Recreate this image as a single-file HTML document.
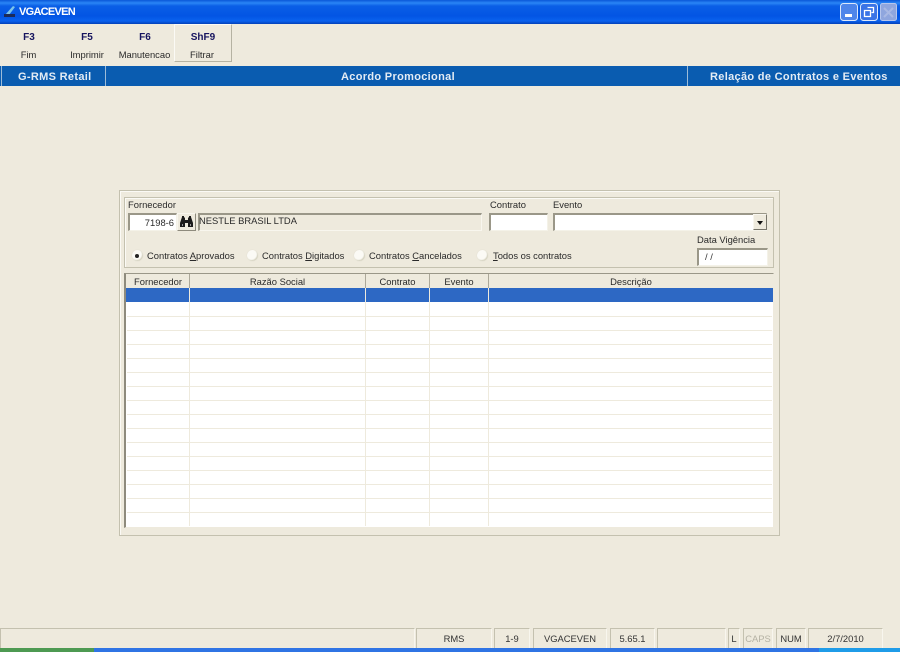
<!DOCTYPE html>
<html><head><meta charset="utf-8"><style>
*{box-sizing:border-box}
html,body{margin:0;padding:0}
body{width:900px;height:652px;position:relative;overflow:hidden;background:#eeeadd;font:9.4px "Liberation Sans",sans-serif;color:#2a2a2a}
.a{position:absolute}
.t{position:absolute;white-space:nowrap;line-height:12px}
.c{text-align:center}
.k{font-weight:bold;color:#16145f;font-size:10px;text-align:center}
.in{position:absolute;background:#fff;border-top:2px solid #9a9788;border-left:2px solid #9a9788;border-right:1px solid #f4f2e8;border-bottom:1px solid #f4f2e8}
.g{position:absolute;border:1px solid #c4c1af;box-shadow:1px 1px 0 #fbfaf5 inset}
.r{position:absolute;width:11px;height:11px;border-radius:50%;background:#fbfaf5;box-shadow:-1px -1px 1px #d6d3c1 inset,0 0 1px #d8d5c5}
.v{position:absolute;top:274px;height:252px;width:1px;background:#eeeadd}
.h{position:absolute;left:127px;width:645px;height:1px;background:#eeeadd}
.s{position:absolute;top:628px;height:20px;border-top:1px solid #c4c1af;border-left:1px solid #c4c1af;text-align:center;line-height:19px;color:#333;border-right:1px solid #f8f6ee}
u{text-decoration:underline}
.b{color:#e4ecf4;font-weight:bold;font-size:11px;letter-spacing:.32px}
</style></head><body>
<div class="a" style="left:0;top:0;width:900px;height:24px;background:linear-gradient(#0a57d8 0,#2a86f6 3px,#0a5fe6 6px,#0355e4 16px,#0a62ee 21px,#0340b8 24px)"></div>
<svg class="a" style="left:2px;top:4px" width="16" height="16" viewBox="0 0 16 16"><path d="M3 11L11 2l2 1-6 8z" fill="#7cc4e8"/><path d="M2 10h11v3H2z" fill="#1c2a58"/></svg>
<div class="t" style="left:19px;top:6px;color:#fff;font-weight:bold;font-size:11px;letter-spacing:-.72px">VGACEVEN</div>
<svg class="a" style="left:840px;top:3px" width="57" height="18" viewBox="0 0 57 18">
<rect x=".5" y=".5" width="17" height="17" rx="3" fill="#4f86ea" stroke="#dce8fb"/><rect x="5" y="11" width="7" height="3" fill="#fff"/>
<rect x="20.5" y=".5" width="17" height="17" rx="3" fill="#3a74e6" stroke="#dce8fb"/><path d="M27.5 4.5h6v5h-2M24.5 7.500h6v6h-6z" fill="none" stroke="#fff" stroke-width="1.300"/>
<rect x="40.500" y=".5" width="16" height="17" rx="2" fill="#8fa6de" stroke="#b6c6ec"/><path d="M44 5l9 9M53 5l-9 9" stroke="#a9b9e4" stroke-width="2"/>
</svg>

<div class="t k" style="left:0;top:32px;width:58px">F3</div><div class="t c" style="left:0;top:49px;width:57px">Fim</div>
<div class="t k" style="left:58px;top:32px;width:58px">F5</div><div class="t c" style="left:58px;top:49px;width:58px">Imprimir</div>
<div class="t k" style="left:116px;top:32px;width:58px">F6</div><div class="t c" style="left:116px;top:49px;width:57px">Manutencao</div>
<div class="a" style="left:174px;top:24px;width:58px;height:38px;border:1px solid;border-color:#fbfaf5 #b5b2a2 #b5b2a2 #fbfaf5"></div>
<div class="t k" style="left:174px;top:32px;width:58px">ShF9</div><div class="t c" style="left:174px;top:49px;width:56px">Filtrar</div>

<div class="a" style="left:0;top:66px;width:900px;height:20px;background:#0a5cb0"></div>
<div class="a" style="left:1px;top:66px;width:105px;height:20px;border-left:1px solid #9dbcd8;border-right:1px solid #9dbcd8"></div>
<div class="a" style="left:687px;top:66px;width:1px;height:20px;background:#9dbcd8"></div>
<div class="t b" style="left:18px;top:71px">G-RMS Retail</div>
<div class="t c b" style="left:106px;top:71px;width:584px">Acordo Promocional</div>
<div class="t b" style="left:710px;top:71px">Relação de Contratos e Eventos</div>

<div class="g" style="left:119px;top:190px;width:661px;height:346px"></div>
<div class="g" style="left:124px;top:197px;width:650px;height:71px"></div>

<div class="t" style="left:128px;top:199px">Fornecedor</div>
<div class="in" style="left:128px;top:213px;width:49px;height:18px;text-align:right;padding-right:2px;line-height:15px">7198-6</div>
<div class="a" style="left:177px;top:213px;width:19px;height:18px;border:1px solid;border-color:#f8f6ee #8e8b7d #8e8b7d #f8f6ee"></div>
<svg class="a" style="left:179px;top:215px" width="15" height="13" viewBox="0 0 15 13"><path d="M3 1h2v1l1 1v2h3V3l1-1V1h2v1l2 6v4H9V8H6v4H1V8l2-6z" fill="#1a1a1a"/><path d="M3 9h1v2H3zM11 9h1v2h-1z" fill="#999"/></svg>
<div class="a" style="left:198px;top:213px;width:284px;height:18px;border-top:2px solid #9a9788;border-left:2px solid #9a9788;border-right:1px solid #f8f6ee;border-bottom:1px solid #f8f6ee"></div>
<div class="t" style="left:199px;top:215px">NESTLE BRASIL LTDA</div>

<div class="t" style="left:490px;top:199px">Contrato</div>
<div class="in" style="left:489px;top:213px;width:59px;height:18px"></div>
<div class="t" style="left:553px;top:199px">Evento</div>
<div class="in" style="left:553px;top:213px;width:214px;height:18px"></div>
<div class="a" style="left:753px;top:214px;width:14px;height:16px;background:#eeeadd;border:1px solid;border-color:#f8f6ee #77756a #77756a #f8f6ee"></div>
<div class="a" style="left:757px;top:221px;width:0;height:0;border-left:3.5px solid transparent;border-right:3.5px solid transparent;border-top:4px solid #111"></div>

<div class="t" style="left:697px;top:234px">Data Vigência</div>
<div class="in" style="left:697px;top:248px;width:71px;height:18px;padding-left:6px;line-height:14px;color:#333">/ /</div>

<div class="r" style="left:132px;top:250px"></div><div class="a" style="left:135px;top:254px;width:4px;height:4px;border-radius:50%;background:#222"></div>
<div class="t" style="left:147px;top:250px">Contratos <u>A</u>provados</div>
<div class="r" style="left:247px;top:250px"></div>
<div class="t" style="left:262px;top:250px">Contratos <u>D</u>igitados</div>
<div class="r" style="left:354px;top:250px"></div>
<div class="t" style="left:369px;top:250px">Contratos <u>C</u>ancelados</div>
<div class="r" style="left:477px;top:250px"></div>
<div class="t" style="left:493px;top:250px"><u>T</u>odos os contratos</div>

<div class="a" style="left:124px;top:273px;width:650px;height:255px;background:#fff;border-top:1px solid #9a9788;border-left:2px solid #8e8b7d;border-right:1px solid #eeeadd;border-bottom:1px solid #eeeadd"></div>
<div class="a" style="left:126px;top:274px;width:647px;height:14px;background:#eeeadd"></div>
<div class="a" style="left:126px;top:288px;width:647px;height:14px;background:#2d68c4"></div>
<div class="h" style="top:316px"></div><div class="h" style="top:330px"></div><div class="h" style="top:344px"></div><div class="h" style="top:358px"></div><div class="h" style="top:372px"></div><div class="h" style="top:386px"></div><div class="h" style="top:400px"></div><div class="h" style="top:414px"></div><div class="h" style="top:428px"></div><div class="h" style="top:442px"></div><div class="h" style="top:456px"></div><div class="h" style="top:470px"></div><div class="h" style="top:484px"></div><div class="h" style="top:498px"></div><div class="h" style="top:512px"></div>
<div class="v" style="left:189px"></div><div class="v" style="left:365px"></div><div class="v" style="left:429px"></div><div class="v" style="left:488px"></div>
<div class="a" style="left:189px;top:274px;width:1px;height:14px;background:#aca899"></div><div class="a" style="left:365px;top:274px;width:1px;height:14px;background:#aca899"></div><div class="a" style="left:429px;top:274px;width:1px;height:14px;background:#aca899"></div><div class="a" style="left:488px;top:274px;width:1px;height:14px;background:#aca899"></div>
<div class="t c" style="left:127px;top:276px;width:62px">Fornecedor</div>
<div class="t c" style="left:190px;top:276px;width:175px">Razão Social</div>
<div class="t c" style="left:366px;top:276px;width:63px">Contrato</div>
<div class="t c" style="left:430px;top:276px;width:58px">Evento</div>
<div class="t c" style="left:489px;top:276px;width:284px">Descrição</div>

<div class="s" style="left:0;width:415px"></div>
<div class="s" style="left:416px;width:76px">RMS</div>
<div class="s" style="left:494px;width:36px">1-9</div>
<div class="s" style="left:533px;width:74px">VGACEVEN</div>
<div class="s" style="left:610px;width:45px">5.65.1</div>
<div class="s" style="left:657px;width:69px"></div>
<div class="s" style="left:728px;width:12px">L</div>
<div class="s" style="left:743px;width:30px;color:#b5b2a4">CAPS</div>
<div class="s" style="left:776px;width:30px">NUM</div>
<div class="s" style="left:808px;width:75px">2/7/2010</div>

<div class="a" style="left:0;top:648px;width:900px;height:4px;background:#2f74e4"></div>
<div class="a" style="left:0;top:648px;width:94px;height:4px;background:#4e9a52"></div>
<div class="a" style="left:819px;top:648px;width:81px;height:4px;background:#1f9ce8"></div>
</body></html>
